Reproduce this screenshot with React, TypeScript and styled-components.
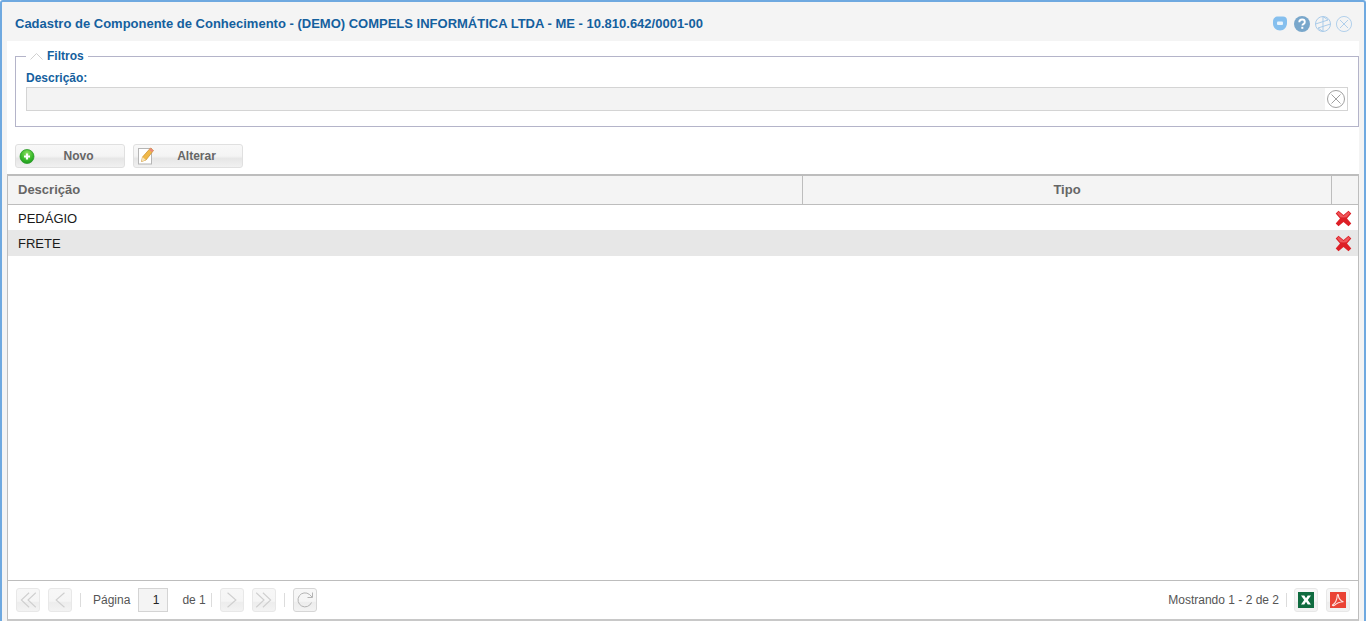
import { FC, ReactNode } from 'react';
import styled, { createGlobalStyle } from 'styled-components';

const GlobalStyle = createGlobalStyle`
  html, body {
    margin: 0;
    padding: 0;
    height: 100%;
    overflow: hidden;
    background: #fff;
  }
  body {
    font-family: "Liberation Sans", Arial, sans-serif;
    font-size: 12px;
  }
`;

const Window = styled.div`
  box-sizing: border-box;
  width: 1366px;
  height: 621px;
  display: flex;
  flex-direction: column;
  background: #f4f4f4;
  border: 2px solid #6fa9e0;
  border-bottom: none;
  border-radius: 3px 3px 0 0;
`;

const TitleBar = styled.div`
  height: 39px;
  flex: none;
  display: flex;
  align-items: center;
  justify-content: space-between;
  padding: 4px 12px 0 13px;
  box-sizing: border-box;
`;

const Title = styled.div`
  color: #14609e;
  font-size: 13px;
  font-weight: bold;
`;

const TitleTools = styled.div`
  display: flex;
  align-items: center;
  gap: 5px;
`;

const Body = styled.div`
  flex: 1;
  min-height: 0;
  margin: 0 5px 0 5px;
  background: #fff;
  display: flex;
  flex-direction: column;
`;

const Fieldset = styled.div`
  box-sizing: border-box;
  position: relative;
  height: 71px;
  margin: 15px 0 0 8px;
  padding: 14px 10px 0 10px;
  border: 1px solid #b4b4c9;
`;

const Legend = styled.div`
  position: absolute;
  top: -8px;
  left: 10px;
  display: flex;
  align-items: center;
  gap: 4px;
  padding: 0 4px;
  background: #fff;
  color: #14609e;
  font-size: 12px;
  font-weight: bold;
  line-height: 14px;
`;

const FieldLabel = styled.div`
  color: #14609e;
  font-size: 12px;
  font-weight: bold;
  line-height: 14px;
  margin-bottom: 2px;
`;

const InputBox = styled.div`
  box-sizing: border-box;
  height: 24px;
  display: flex;
  border: 1px solid #d4d4d4;
  background: #fff;
`;

const InputFill = styled.div`
  flex: 1;
  background: #f3f3f3;
`;

const InputClear = styled.div`
  width: 22px;
  display: flex;
  align-items: center;
  justify-content: center;
`;

const Toolbar = styled.div`
  display: flex;
  gap: 8px;
  margin: 17px 0 6px 8px;
`;

const ActionButton = styled.div`
  box-sizing: border-box;
  position: relative;
  width: 110px;
  height: 24px;
  display: flex;
  align-items: center;
  justify-content: center;
  padding-left: 17px;
  border: 1px solid #e0e0e0;
  border-radius: 3px;
  background: linear-gradient(#f8f8f8 0%, #f4f4f4 50%, #e6e6e6 62%, #f1f1f1 100%);
  color: #666;
  font-size: 12px;
  font-weight: bold;
`;

const ButtonIcon = styled.span`
  position: absolute;
  left: 2px;
  top: 2px;
  display: flex;
`;

const Grid = styled.div`
  flex: 1;
  min-height: 0;
  display: flex;
  flex-direction: column;
  border: 1px solid #bdbdbd;
  border-top-width: 2px;
  border-bottom: 2px solid #c8c8c8;
`;

const GridHeader = styled.div`
  box-sizing: border-box;
  height: 29px;
  flex: none;
  display: flex;
  background: #f4f4f4;
  border-bottom: 1px solid #bdbdbd;
  color: #666;
  font-size: 13px;
  font-weight: bold;
`;

const HeaderCell = styled.div<{ $width?: number; $center?: boolean }>`
  box-sizing: border-box;
  display: flex;
  align-items: center;
  ${({ $width }) => ($width ? `width: ${$width}px; flex: none;` : 'flex: 1;')}
  justify-content: ${({ $center }) => ($center ? 'center' : 'flex-start')};
  padding: 0 0 2px ${({ $center }) => ($center ? '0' : '10px')};
  border-right: 1px solid #bdbdbd;
  &:last-child {
    border-right: none;
  }
`;

const GridRows = styled.div`
  flex: 1;
  min-height: 0;
  background: #fff;
`;

const Row = styled.div<{ $selected?: boolean }>`
  box-sizing: border-box;
  height: ${({ $selected }) => ($selected ? '26px' : '25px')};
  display: flex;
  align-items: center;
  justify-content: space-between;
  padding: ${({ $selected }) => ($selected ? '1px' : '2px')} 6px 0 10px;
  background: ${({ $selected }) => ($selected ? '#e7e7e7' : '#fff')};
  color: #1a1a1a;
  font-size: 13px;
`;

const Pager = styled.div`
  box-sizing: border-box;
  height: 39px;
  flex: none;
  display: flex;
  align-items: center;
  gap: 8px;
  padding: 0 8px;
  border-top: 1px solid #bdbdbd;
  background: #fff;
  color: #555;
  font-size: 12px;
`;

const PagerButton = styled.div<{ $strong?: boolean }>`
  box-sizing: border-box;
  width: 24px;
  height: 24px;
  flex: none;
  display: flex;
  align-items: center;
  justify-content: center;
  border: 1px solid ${({ $strong }) => ($strong ? '#d6d6d6' : '#e8e8e8')};
  border-radius: 3px;
  background: linear-gradient(#f7f7f7 0%, #f5f5f5 55%, #ededed 62%, #f3f3f3 100%);
`;

const PagerSeparator = styled.div`
  width: 1px;
  height: 14px;
  flex: none;
  background: #dcdcdc;
`;

const PageInput = styled.div`
  box-sizing: border-box;
  width: 30px;
  height: 24px;
  flex: none;
  display: flex;
  align-items: center;
  justify-content: flex-end;
  padding-right: 8px;
  border: 1px solid #d4d4d4;
  background: #f4f4f4;
  color: #222;
`;

const PagerGroup = styled.div<{ $gap: number; $indent?: number }>`
  display: flex;
  align-items: center;
  gap: ${({ $gap }) => $gap}px;
  margin-left: ${({ $indent }) => $indent ?? 0}px;
`;

const PagerSpacer = styled.div`
  flex: 1;
`;

const CircleCross: FC<{ size: number; color: string }> = ({ size, color }) => (
  <svg width={size} height={size} viewBox="0 0 18 18" fill="none" stroke={color} strokeWidth="1">
    <circle cx="9" cy="9" r="8.500" />
    <path d="M4.500 4.500l9 9M13.500 4.500l-9 9" />
  </svg>
);

const ChatIcon = () => (
  <svg width="16" height="15" viewBox="0 0 16 15">
    <path d="M5 .5h5c2.500 0 4 1.500 4 4V7c0 4-3 7.500-7 7.500-4 0-7-3-7-7V5.500C0 2.500 2 .5 5 .5z" fill="#85bfee" />
    <rect x="4" y="5.500" width="6" height="3.500" rx="1" fill="#e8f4fd" />
  </svg>
);

const HelpIcon = () => (
  <svg width="16" height="16" viewBox="0 0 16 16">
    <circle cx="8" cy="8" r="8" fill="#79a7cb" />
    <path d="M5.300 6.200C5.300 4.600 6.500 3.500 8.100 3.500c1.600 0 2.700 1 2.700 2.400 0 1.100-.6 1.700-1.400 2.200-.7.500-1 .8-1 1.500" fill="none" stroke="#fff" strokeWidth="1.900" />
    <rect x="7.300" y="10.800" width="2" height="2" fill="#fff" />
  </svg>
);

const ExpandIcon = () => (
  <svg width="16" height="16" viewBox="0 0 16 16" fill="none" stroke="#a9cbe9" strokeWidth="1">
    <circle cx="8" cy="8" r="7.500" />
    <path d="M8 .5v15M.5 8L13 4M15.500 8L3 12M8 .5L13 4M8 15.500L3 12" />
  </svg>
);

const AddIcon = () => (
  <svg width="18" height="18" viewBox="0 0 18 18">
    <defs>
      <radialGradient id="addGlow" cx="50%" cy="30%" r="70%">
        <stop offset="0%" stopColor="#8fe063" />
        <stop offset="60%" stopColor="#3cbb2c" />
        <stop offset="100%" stopColor="#1d9a1f" />
      </radialGradient>
    </defs>
    <circle cx="9" cy="9.500" r="7" fill="url(#addGlow)" stroke="#2c9a2a" strokeWidth="0.800" />
    <path d="M9 6.500v6M6 9.500h6" stroke="#fff" strokeWidth="2.200" />
  </svg>
);

const EditIcon = () => (
  <svg width="19" height="19" viewBox="0 0 19 19">
    <rect x="2.500" y="1.500" width="13" height="15.500" fill="#fff" stroke="#b5b5b5" strokeWidth="1" />
    <g transform="translate(0 -1)">
      <path d="M5.500 15.500l1-4.500L14.500 2 17.500 4.500 10 14z" fill="#f0b848" stroke="#c98c2a" strokeWidth="0.700" />
      <path d="M14.500 2L17.500 4.500 16 6.200 13 3.700z" fill="#e9897a" />
      <path d="M5.500 15.500l1-4.500 3.500 3z" fill="#f6e3b8" />
    </g>
  </svg>
);

const DeleteIcon = () => (
  <svg width="17" height="17" viewBox="0 0 17 17">
    <path d="M3.500 .8L8.500 5 13.500 .8 16.300 3.500 12 8.500l4.300 5-2.800 2.700-5-4.200-5 4.200L.7 13.500 5 8.500.7 3.500z" fill="#dd1f26" />
    <path d="M3.500 1.800L8.500 6l5-4.200 1.500 1.500-3.400 4L8.500 7.500 5.300 7.300l-3.300-4z" fill="#ee5559" />
  </svg>
);

const Chevron: FC<{ double?: boolean; left?: boolean }> = ({ double, left }) => (
  <svg width="20" height="20" viewBox="0 0 18 18" fill="none" stroke="#cfcfcf" strokeWidth="1">
    <g transform={left ? 'matrix(-1 0 0 1 18 0)' : undefined}>
      {double ? (
        <>
          <path d="M2 2.500L9 9l-7 6.500" />
          <path d="M8 2.500L15 9l-7 6.500" />
        </>
      ) : (
        <path d="M5 2.500L12.500 9 5 15.500" />
      )}
    </g>
  </svg>
);

const RefreshIcon = () => (
  <svg width="18" height="18" viewBox="0 0 18 18" fill="none" stroke="#b4b4b4" strokeWidth="1">
    <path d="M15.500 11.500A7 7 0 1 1 13.500 3.500L16 6" />
    <path d="M16.500 1.500V6.500H11.500" />
  </svg>
);

const ExcelIcon = () => (
  <svg width="16" height="16" viewBox="0 0 16 16">
    <rect width="16" height="16" fill="#0f6b3f" />
    <path d="M3 3.500h3.300L8 6.300l1.700-2.800H13L9.800 8l3.200 4.500H9.700L8 9.700l-1.700 2.800H3L6.200 8z" fill="#fff" />
  </svg>
);

const PdfIcon = () => (
  <svg width="16" height="16" viewBox="0 0 16 16">
    <rect width="16" height="16" fill="#ea4335" />
    <path d="M2.500 13C5 11.500 7 8 7.300 3.200c.1-1 1.100-1 1.100 0 0 3 2.200 6 5.100 6.500-3 .2-6.500 1-8.800 3.500-.9.800-2.700.4-2.200-.2z" fill="none" stroke="#fbe3e0" strokeWidth="1.100" />
  </svg>
);

const ToolButton: FC<{ icon: ReactNode; label: string }> = ({ icon, label }) => (
  <ActionButton>
    <ButtonIcon>{icon}</ButtonIcon>
    {label}
  </ActionButton>
);

const rows = ['PEDÁGIO', 'FRETE'];

export default function App() {
  return (
    <>
      <GlobalStyle />
      <Window>
        <TitleBar>
          <Title>Cadastro de Componente de Conhecimento - (DEMO) COMPELS INFORMÁTICA LTDA - ME - 10.810.642/0001-00</Title>
          <TitleTools>
            <ChatIcon />
            <HelpIcon />
            <ExpandIcon />
            <CircleCross size={16} color="#a9cbe9" />
          </TitleTools>
        </TitleBar>
        <Body>
          <Fieldset>
            <Legend>
              <svg width="13" height="7" viewBox="0 0 13 7" fill="none" stroke="#d0d0d0" strokeWidth="1">
                <path d="M.5 6.500L6.500 .5l6 6" />
              </svg>
              Filtros
            </Legend>
            <FieldLabel>Descrição:</FieldLabel>
            <InputBox>
              <InputFill />
              <InputClear>
                <CircleCross size={18} color="#a0a0a0" />
              </InputClear>
            </InputBox>
          </Fieldset>
          <Toolbar>
            <ToolButton icon={<AddIcon />} label="Novo" />
            <ToolButton icon={<EditIcon />} label="Alterar" />
          </Toolbar>
          <Grid>
            <GridHeader>
              <HeaderCell $width={795}>Descrição</HeaderCell>
              <HeaderCell $center>Tipo</HeaderCell>
              <HeaderCell $width={26} />
            </GridHeader>
            <GridRows>
              {rows.map((row, index) => (
                <Row key={row} $selected={index === 1}>
                  {row}
                  <DeleteIcon />
                </Row>
              ))}
            </GridRows>
            <Pager>
              <PagerButton><Chevron double left /></PagerButton>
              <PagerButton><Chevron left /></PagerButton>
              <PagerGroup $gap={12}>
                <PagerSeparator />
                <span>Página</span>
              </PagerGroup>
              <PageInput>1</PageInput>
              <PagerGroup $gap={5} $indent={6}>
                <span>de 1</span>
                <PagerSeparator />
              </PagerGroup>
              <PagerButton><Chevron /></PagerButton>
              <PagerButton><Chevron double /></PagerButton>
              <PagerSeparator />
              <PagerButton $strong><RefreshIcon /></PagerButton>
              <PagerSpacer />
              <PagerGroup $gap={7}>
                <span>Mostrando 1 - 2 de 2</span>
                <PagerSeparator />
                <PagerButton><ExcelIcon /></PagerButton>
              </PagerGroup>
              <PagerButton><PdfIcon /></PagerButton>
            </Pager>
          </Grid>
        </Body>
      </Window>
    </>
  );
}
